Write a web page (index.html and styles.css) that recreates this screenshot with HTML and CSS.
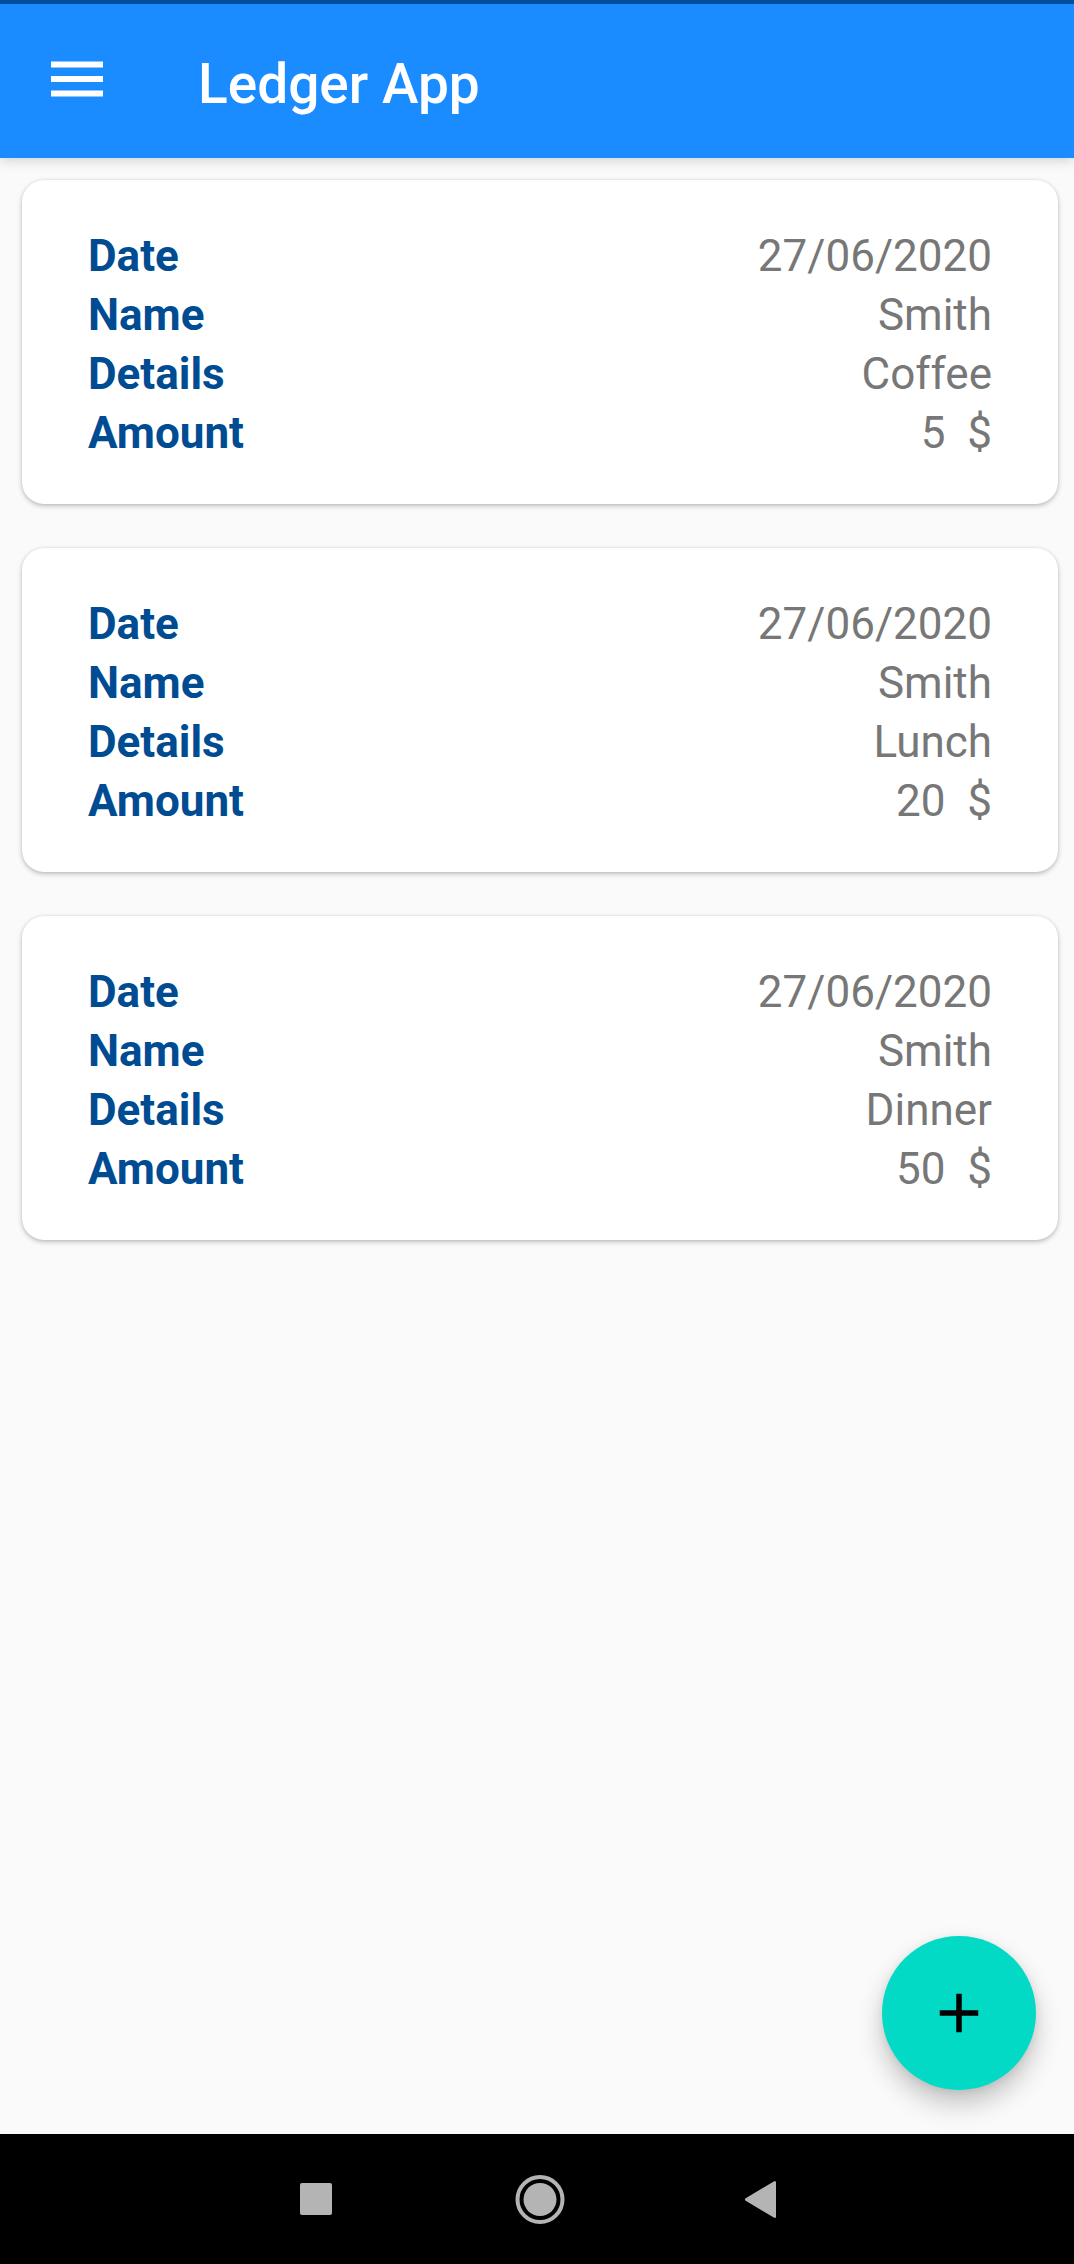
FILE: index.html
```html
<!DOCTYPE html>
<html lang="en">
<head>
  <meta charset="utf-8">
  <meta name="viewport" content="width=device-width, initial-scale=1">
  <title>Ledger App</title>
  <link rel="stylesheet" href="styles.css">
</head>
<body>
  <header class="app-bar">
    <button class="menu-button" type="button" aria-label="Open menu">
      <svg class="menu-icon" viewBox="0 0 52 36" aria-hidden="true">
        <path d="M0 .5h52v6H0zM0 15h52v6H0zM0 29.5h52v6H0z"/>
      </svg>
    </button>
    <h1 class="app-title">Ledger App</h1>
  </header>

  <main class="content">
    <ul class="entries">
      <li class="card">
        <dl class="entry">
          <div class="row"><dt>Date</dt><dd>27/06/2020</dd></div>
          <div class="row"><dt>Name</dt><dd>Smith</dd></div>
          <div class="row"><dt>Details</dt><dd>Coffee</dd></div>
          <div class="row"><dt>Amount</dt><dd>5&nbsp; $</dd></div>
        </dl>
      </li>
      <li class="card">
        <dl class="entry">
          <div class="row"><dt>Date</dt><dd>27/06/2020</dd></div>
          <div class="row"><dt>Name</dt><dd>Smith</dd></div>
          <div class="row"><dt>Details</dt><dd>Lunch</dd></div>
          <div class="row"><dt>Amount</dt><dd>20&nbsp; $</dd></div>
        </dl>
      </li>
      <li class="card">
        <dl class="entry">
          <div class="row"><dt>Date</dt><dd>27/06/2020</dd></div>
          <div class="row"><dt>Name</dt><dd>Smith</dd></div>
          <div class="row"><dt>Details</dt><dd>Dinner</dd></div>
          <div class="row"><dt>Amount</dt><dd>50&nbsp; $</dd></div>
        </dl>
      </li>
    </ul>
    <button class="fab" type="button" aria-label="Add entry">
      <svg class="fab-icon" viewBox="0 0 66 66" aria-hidden="true">
        <path d="M52.25 35.75h-16.5v16.5h-5.5v-16.5h-16.5v-5.5h16.5v-16.5h5.5v16.5h16.5z"/>
      </svg>
    </button>
  </main>

  <nav class="system-nav" aria-label="System">
    <button class="nav-button" type="button" aria-label="Recent apps">
      <svg class="nav-icon" viewBox="0 0 60 60" aria-hidden="true"><rect x="14" y="14" width="32" height="32" rx="2"/></svg>
    </button>
    <button class="nav-button" type="button" aria-label="Home">
      <svg class="nav-icon" viewBox="0 0 60 60" aria-hidden="true">
        <circle cx="30" cy="30.5" r="16.5"/>
        <circle class="ring" cx="30" cy="30.5" r="22.5"/>
      </svg>
    </button>
    <button class="nav-button" type="button" aria-label="Back">
      <svg class="nav-icon" viewBox="0 0 60 60" aria-hidden="true">
        <path d="M11.7 29.2 39.8 12.4Q42 11.4 42 13.6V47.4Q42 49.6 39.8 48.6L11.7 31.8Q10.1 30.5 11.7 29.2z"/>
      </svg>
    </button>
  </nav>
</body>
</html>
```
FILE: styles.css
```css
* {
  box-sizing: border-box;
}

body {
  display: flex;
  flex-direction: column;
  min-height: 100vh;
  margin: 0;
  background: #fafafa;
  font-family: Roboto, sans-serif;
}

button {
  display: flex;
  align-items: center;
  justify-content: center;
  padding: 0;
  border: 0;
  background: none;
  cursor: pointer;
}

.app-bar {
  display: flex;
  align-items: center;
  height: 158px;
  border-top: 4px solid #004f9a;
  background: #1a8cff;
  box-shadow: 0 2px 12px rgba(0, 0, 0, 0.18);
}

.menu-button {
  width: 154px;
  height: 154px;
  padding-bottom: 4px;
}

.menu-icon {
  width: 52px;
  height: 36px;
  fill: #fff;
}

.app-title {
  margin: 0;
  padding: 6px 0 0 44px;
  color: #fff;
  font-size: 55px;
  font-weight: 500;
  line-height: 64px;
}

.content {
  position: relative;
  flex: 1;
  padding: 22px 16px 220px 22px;
}

.entries {
  display: flex;
  flex-direction: column;
  gap: 44px;
  margin: 0;
  padding: 0;
  list-style: none;
}

.card {
  padding: 47px 66px 41px;
  border-radius: 22px;
  background: #fff;
  box-shadow: 0 2px 5px rgba(0, 0, 0, 0.24), 0 0 3px rgba(0, 0, 0, 0.08);
}

.entry {
  margin: 0;
}

.row {
  display: flex;
  justify-content: space-between;
  font-size: 44px;
  line-height: 59px;
}

.row dt {
  color: #004c93;
  font-weight: 700;
}

.row dd {
  margin: 0;
  color: #777;
}

.fab {
  position: absolute;
  right: 38px;
  bottom: 44px;
  width: 154px;
  height: 154px;
  border-radius: 50%;
  background: #03dac6;
  box-shadow: 0 14px 26px rgba(0, 0, 0, 0.22), 0 2px 8px rgba(0, 0, 0, 0.08);
}

.fab-icon {
  width: 66px;
  height: 66px;
  fill: #000;
}

.system-nav {
  display: flex;
  justify-content: center;
  height: 130px;
  padding-left: 6px;
  background: #000;
}

.nav-button {
  width: 224px;
}

.nav-icon {
  width: 60px;
  height: 60px;
  fill: #b4b4b4;
}

.nav-icon .ring {
  fill: none;
  stroke: #b4b4b4;
  stroke-width: 4;
}
```
